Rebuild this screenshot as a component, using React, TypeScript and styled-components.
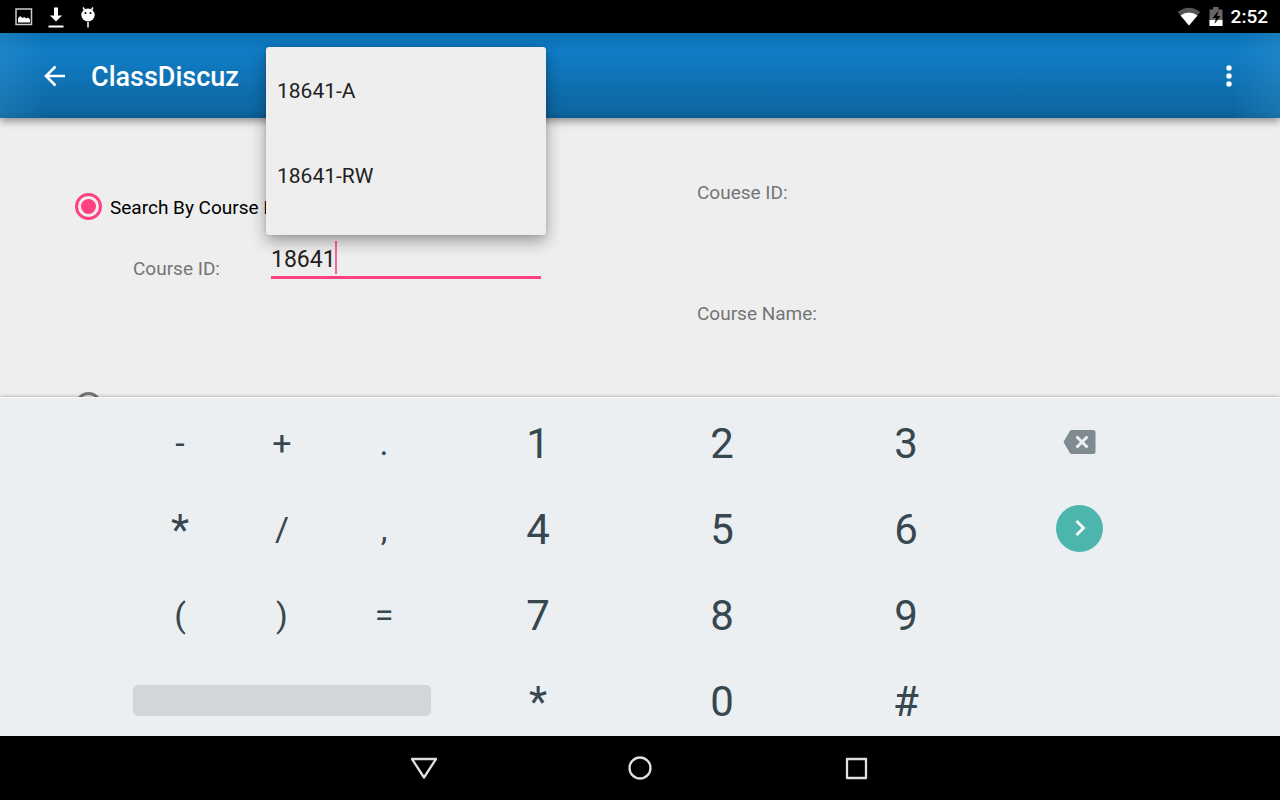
import React from 'react';
import styled, { createGlobalStyle } from 'styled-components';

const GlobalStyle = createGlobalStyle`
  *, *::before, *::after { box-sizing: border-box; }
  body { margin: 0; background: #000; font-family: Roboto, "Liberation Sans", sans-serif; }
  button, input { font-family: inherit; }
`;

const Screen = styled.div`
  display: flex;
  flex-direction: column;
  height: 100vh;
  overflow: hidden;
  background: #eeeeee;
`;

const StatusBar = styled.header`
  display: flex;
  flex: none;
  justify-content: space-between;
  align-items: center;
  height: 33px;
  padding: 0 12px 0 15px;
  background: #000;
  color: #fff;
`;

const StatusGroup = styled.div<{ $gap: number }>`
  display: flex;
  align-items: center;
  gap: ${(p) => p.$gap}px;
`;

const Clock = styled.time`
  font-size: 19px;
  font-weight: 500;
  line-height: 33px;
`;

const AppBar = styled.div`
  position: relative;
  z-index: 1;
  display: flex;
  flex: none;
  align-items: center;
  height: 85px;
  padding: 0 31px 0 35px;
  background:
    linear-gradient(90deg, rgba(60, 155, 210, 0.3), rgba(60, 155, 210, 0) 48px, rgba(60, 155, 210, 0) calc(100% - 48px), rgba(60, 155, 210, 0.3)),
    linear-gradient(180deg, #0971b3 0, #107cc5 18px, #1079c0 30px, #0d66a0 78px, #0b5d93 100%);
  box-shadow: 0 3px 8px rgba(0, 0, 0, 0.42);
`;

const IconButton = styled.button`
  display: flex;
  justify-content: center;
  align-items: center;
  width: 40px;
  height: 48px;
  padding: 0;
  border: 0;
  background: none;
  color: #fff;
`;

const Title = styled.h1`
  flex: 1;
  margin: 0 0 0 16px;
  padding-top: 2px;
  color: #fff;
  font-size: 27px;
  font-weight: 500;
  line-height: 32px;
`;

const Content = styled.main`
  display: grid;
  grid-template-columns: 1fr 1fr;
  flex: 1 1 0;
  min-height: 0;
`;

const SearchForm = styled.form`
  padding: 72px 99px 0 75px;
`;

const RadioRow = styled.label`
  display: flex;
  align-items: center;
  gap: 8px;
  height: 33px;
  color: #000;
  font-size: 19px;
  line-height: 24px;
  white-space: nowrap;
`;

const RadioText = styled.span`
  padding-top: 2px;
`;

const Radio = styled.input`
  display: grid;
  place-items: center;
  width: 27px;
  height: 27px;
  margin: 0;
  appearance: none;
  border: 3px solid #757575;
  border-radius: 50%;

  &:checked { border-color: #ff4081; }
  &:checked::before {
    content: '';
    width: 15px;
    height: 15px;
    border-radius: 50%;
    background: #ff4081;
  }
`;

const FieldRow = styled.div`
  display: flex;
  height: 166px;
  padding: 16px 0 0 58px;
`;

const Label = styled.label`
  flex: none;
  width: 138px;
  padding-top: 18px;
  color: #757575;
  font-size: 19px;
  line-height: 24px;
`;

const Field = styled.div`
  position: relative;
  flex: 1;
  height: 40px;
`;

const TextInput = styled.input`
  display: block;
  width: 100%;
  height: 40px;
  padding: 3px 0 0;
  border: 0;
  border-bottom: 3px solid #ff4081;
  outline: 0;
  background: none;
  color: #212121;
  caret-color: transparent;
  font-size: 23px;
`;

const Caret = styled.span`
  position: absolute;
  top: 2px;
  left: 64px;
  width: 2px;
  height: 33px;
  background: #ff6699;
`;

const Suggestions = styled.ul`
  position: absolute;
  z-index: 3;
  right: -5px;
  bottom: calc(100% + 4px);
  left: -5px;
  margin: 0;
  padding: 1px 0 17px;
  border-radius: 3px;
  background: #eeeeee;
  box-shadow: 0 6px 16px rgba(0, 0, 0, 0.36), 0 0 3px rgba(0, 0, 0, 0.12);
  list-style: none;
`;

const Suggestion = styled.button`
  display: block;
  width: 100%;
  height: 85px;
  padding: 0 11px;
  border: 0;
  background: none;
  color: #212121;
  font-size: 21px;
  text-align: left;
`;

const Details = styled.section`
  display: flex;
  flex-direction: column;
  gap: 97px;
  padding: 63px 0 0 57px;
`;

const Detail = styled.p`
  margin: 0;
  color: #757575;
  font-size: 19px;
  line-height: 24px;
`;

const Keypad = styled.section`
  position: relative;
  z-index: 2;
  display: grid;
  flex: none;
  grid-template-columns: 129fr repeat(3, 102fr) 11fr repeat(3, 184fr) 163fr 119fr;
  grid-auto-rows: 86px;
  margin-bottom: -7px;
  padding-top: 1px;
  border-top: 1px solid #f6f7f8;
  background: #ebeff2;
  box-shadow: 0 -1px 3px rgba(0, 0, 0, 0.22);
`;

const Key = styled.button<{ $col: number; $row: number }>`
  grid-column: ${(p) => p.$col};
  grid-row: ${(p) => p.$row};
  display: flex;
  justify-content: center;
  align-items: center;
  padding: 0;
  border: 0;
  background: none;
`;

const CharKey = styled(Key)<{ $small?: boolean }>`
  padding-top: 2px;
  color: #37474f;
  font-size: ${(p) => (p.$small ? 34 : 42)}px;
`;

const SpaceKey = styled.button`
  grid-column: 2 / 5;
  grid-row: 4;
  align-self: center;
  height: 31px;
  margin: 0 4px;
  padding: 0;
  border: 0;
  border-radius: 5px;
  background: #d1d6d9;
`;

const NextDisc = styled.span`
  display: grid;
  place-items: center;
  width: 47px;
  height: 47px;
  border-radius: 50%;
  background: #4db6ac;
`;

const NavBar = styled.nav`
  position: relative;
  z-index: 2;
  display: flex;
  flex: none;
  justify-content: center;
  align-items: center;
  gap: 176px;
  height: 64px;
  background: #000;
`;

const symbolRows = [
  ['-', '+', '.'],
  ['*', '/', ','],
  ['(', ')', '='],
];

const digitRows = [
  ['1', '2', '3'],
  ['4', '5', '6'],
  ['7', '8', '9'],
  ['*', '0', '#'],
];

const courses = ['18641-A', '18641-RW'];

export default function App() {
  return (
    <>
      <GlobalStyle />
      <Screen>
        <StatusBar>
          <StatusGroup $gap={15}>
            <svg width="18" height="18" viewBox="0 0 18 18">
              <rect x="1" y="1" width="15.500" height="15.500" fill="none" stroke="#ccc" strokeWidth="1.500" />
              <path d="M3 14.500v-4l2-2.500 2.500 2 2-1 1.500 1.500 2-1 2 2v3z" fill="#fff" />
            </svg>
            <svg width="16" height="22" viewBox="0 0 16 22">
              <path d="M6 1.500h4v8h4l-6 6-6-6h4zM.5 19.500h15v2H.5z" fill="#fff" />
            </svg>
            <svg width="18" height="22" viewBox="0 0 18 22">
              <path d="M4 1.500l2 3M14 1.500l-2 3M9 16v5.500" stroke="#fff" strokeWidth="1.500" />
              <ellipse cx="9" cy="9" rx="6.700" ry="6.500" fill="#fff" />
              <circle cx="6.500" cy="7" r="1" />
              <circle cx="11.500" cy="7" r="1" />
            </svg>
          </StatusGroup>
          <StatusGroup $gap={8}>
            <svg width="24" height="20" viewBox="0 0 24 20">
              <path d="M.7 5Q12-3.500 23.300 5L12 18.500z" fill="#555" />
              <path d="M3.500 8.500Q12 2.500 20.500 8.500L12 18.500z" fill="#fff" />
            </svg>
            <svg width="14" height="20" viewBox="0 0 14 20">
              <path d="M.5 2.500H4V0h5.500v2.500h4V19H.5z" fill="#666" />
              <path d="M.5 13h13v6H.5z" fill="#fff" />
              <path d="M9.500 3.500L3.500 11H7l-1.500 6 6-8H8z" fill="#000" />
            </svg>
            <Clock>2:52</Clock>
          </StatusGroup>
        </StatusBar>

        <AppBar>
          <IconButton aria-label="Back">
            <svg width="22" height="22" viewBox="0 0 22 22" fill="none" stroke="currentColor" strokeWidth="2.600">
              <path d="M21 11H2.500M11.500 1.500L2 11l9.500 9.500" />
            </svg>
          </IconButton>
          <Title>ClassDiscuz</Title>
          <IconButton aria-label="More options">
            <svg width="6" height="22" viewBox="0 0 6 22" fill="currentColor">
              <circle cx="3" cy="3" r="2.700" />
              <circle cx="3" cy="11" r="2.700" />
              <circle cx="3" cy="19" r="2.700" />
            </svg>
          </IconButton>
        </AppBar>

        <Content>
          <SearchForm>
            <RadioRow>
              <Radio type="radio" name="mode" defaultChecked />
              <RadioText>Search By Course ID</RadioText>
            </RadioRow>
            <FieldRow>
              <Label htmlFor="course-id">Course ID:</Label>
              <Field>
                <TextInput id="course-id" defaultValue="18641" autoComplete="off" />
                <Caret />
                <Suggestions>
                  {courses.map((course) => (
                    <li key={course}>
                      <Suggestion type="button">{course}</Suggestion>
                    </li>
                  ))}
                </Suggestions>
              </Field>
            </FieldRow>
            <RadioRow>
              <Radio type="radio" name="mode" aria-label="Search by course name" />
            </RadioRow>
          </SearchForm>
          <Details>
            <Detail>Couese ID:</Detail>
            <Detail>Course Name:</Detail>
          </Details>
        </Content>

        <Keypad>
          {symbolRows.map((row, r) =>
            row.map((char, c) => (
              <CharKey key={char} $row={r + 1} $col={c + 2} $small={char !== '*'}>
                {char}
              </CharKey>
            )),
          )}
          <SpaceKey aria-label="Space" />
          {digitRows.map((row, r) =>
            row.map((char, c) => (
              <CharKey key={char} $row={r + 1} $col={c + 6}>
                {char}
              </CharKey>
            )),
          )}
          <Key $row={1} $col={9} aria-label="Delete">
            <svg width="33" height="26" viewBox="0 0 33 26">
              <path d="M9 1h21q2.500 0 2.500 2.500v19q0 2.500-2.500 2.500H9q-1.500 0-2.300-1.200L.5 13l6.200-10.800Q7.500 1 9 1z" fill="#7f8b90" />
              <path d="M13.500 7.500l11 11M24.500 7.500l-11 11" stroke="#ebeff2" strokeWidth="3" />
            </svg>
          </Key>
          <Key $row={2} $col={9} aria-label="Next">
            <NextDisc>
              <svg width="12" height="18" viewBox="0 0 12 18" fill="none" stroke="#fff" strokeWidth="2.800">
                <path d="M2.500 2l7 7-7 7" />
              </svg>
            </NextDisc>
          </Key>
        </Keypad>

        <NavBar>
          <IconButton aria-label="Hide keyboard">
            <svg width="28" height="24" viewBox="0 0 28 24" fill="none" stroke="#e0e0e0" strokeWidth="2.300" strokeLinejoin="round">
              <path d="M2 3h24L14 21.500z" />
            </svg>
          </IconButton>
          <IconButton aria-label="Home">
            <svg width="24" height="24" viewBox="0 0 24 24" fill="none" stroke="#e0e0e0" strokeWidth="2.300">
              <circle cx="12" cy="12" r="10.500" />
            </svg>
          </IconButton>
          <IconButton aria-label="Recent apps">
            <svg width="24" height="24" viewBox="0 0 24 24" fill="none" stroke="#e0e0e0" strokeWidth="2.300" strokeLinejoin="round">
              <rect x="3" y="3" width="19" height="19" />
            </svg>
          </IconButton>
        </NavBar>
      </Screen>
    </>
  );
}
